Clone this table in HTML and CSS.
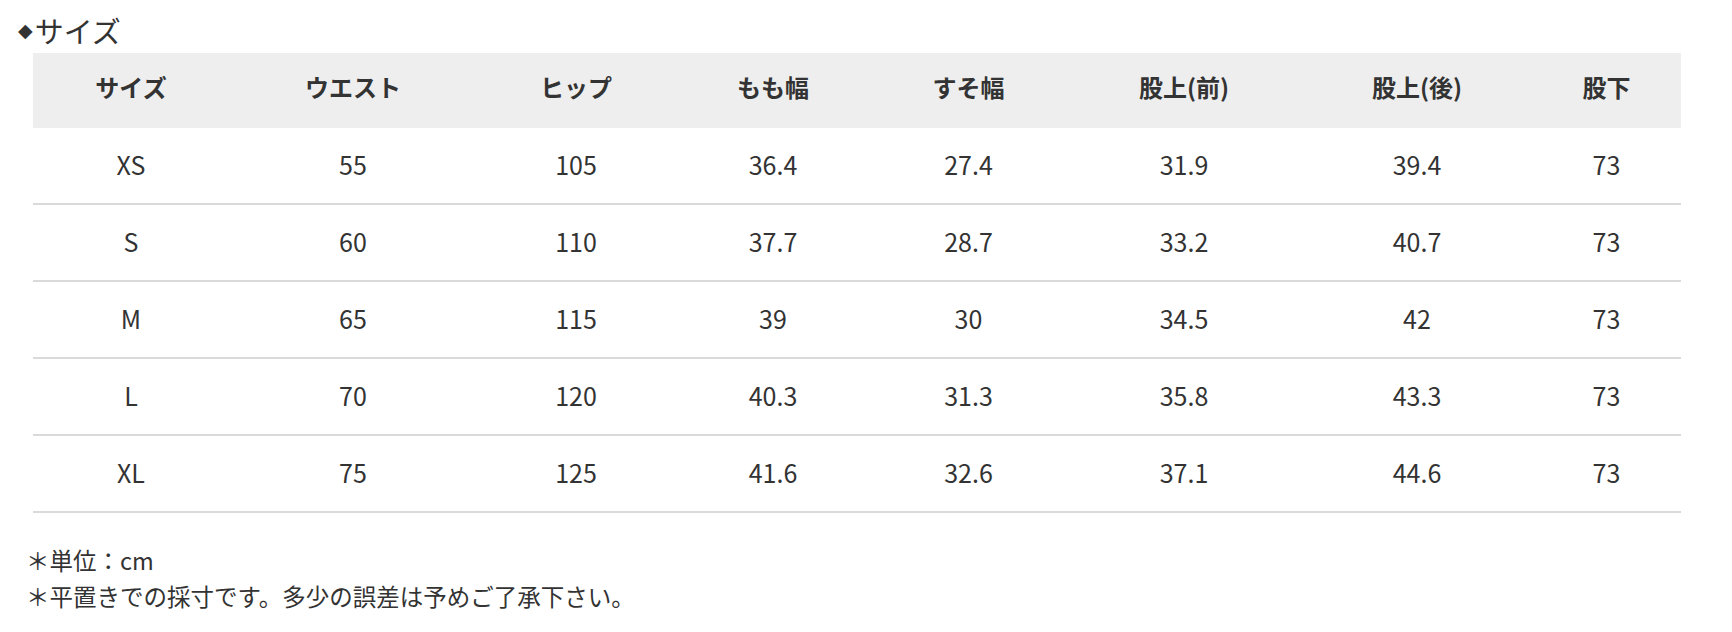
FILE: index.html
```html
<!DOCTYPE html>
<html lang="ja">
<head>
<meta charset="utf-8">
<title>サイズ</title>
<link rel="stylesheet" href="styles.css">
</head>
<body>
<section class="size-section">
  <h2 class="size-title"><span class="diamond">◆</span>サイズ</h2>
  <table class="size-table">
    <colgroup>
      <col class="c1"><col class="c2"><col class="c3"><col class="c4">
      <col class="c5"><col class="c6"><col class="c7"><col class="c8">
    </colgroup>
    <thead>
      <tr><th>サイズ</th><th>ウエスト</th><th>ヒップ</th><th>もも幅</th><th>すそ幅</th><th>股上(前)</th><th>股上(後)</th><th>股下</th></tr>
    </thead>
    <tbody>
      <tr><td>XS</td><td>55</td><td>105</td><td>36.4</td><td>27.4</td><td>31.9</td><td>39.4</td><td>73</td></tr>
      <tr><td>S</td><td>60</td><td>110</td><td>37.7</td><td>28.7</td><td>33.2</td><td>40.7</td><td>73</td></tr>
      <tr><td>M</td><td>65</td><td>115</td><td>39</td><td>30</td><td>34.5</td><td>42</td><td>73</td></tr>
      <tr><td>L</td><td>70</td><td>120</td><td>40.3</td><td>31.3</td><td>35.8</td><td>43.3</td><td>73</td></tr>
      <tr><td>XL</td><td>75</td><td>125</td><td>41.6</td><td>32.6</td><td>37.1</td><td>44.6</td><td>73</td></tr>
    </tbody>
  </table>
  <div class="notes">
    <p>＊単位：cm</p>
    <p>＊平置きでの採寸です。多少の誤差は予めご了承下さい。</p>
  </div>
</section>
</body>
</html>
```

FILE: styles.css
```css
html, body {
  margin: 0;
  padding: 0;
  background: #ffffff;
}
body {
  font-family: "Noto Sans CJK JP", "Noto Sans", sans-serif;
  color: #333333;
}
.size-section {
  padding: 10px 0 0 18px;
}
.size-title {
  margin: 0;
  font-size: 29px;
  font-weight: normal;
  line-height: 40px;
  color: #333333;
  display: flex;
  align-items: center;
}
.diamond {
  font-family: "DejaVu Sans", sans-serif;
  font-size: 19px;
  margin-right: 2px;
}
.size-table {
  margin: 3px 0 0 15px;
  width: 1648px;
  border-collapse: collapse;
  table-layout: fixed;
}
.c1 { width: 196px; }
.c2 { width: 248px; }
.c3 { width: 198px; }
.c4 { width: 196px; }
.c5 { width: 195px; }
.c6 { width: 236px; }
.c7 { width: 230px; }
.c8 { width: 149px; }
.size-table th {
  background: #eeeeee;
  height: 67px;
  padding: 0 0 8px;
  font-size: 24px;
  font-weight: bold;
  text-align: center;
  vertical-align: middle;
  color: #333333;
}
.size-table td {
  height: 71px;
  padding: 0 0 4px;
  font-size: 25px;
  text-align: center;
  vertical-align: middle;
  border-bottom: 2px solid #dadada;
  color: #333333;
}
.notes {
  margin: 29px 0 0 8px;
}
.notes p {
  margin: 0;
  font-size: 23.5px;
  line-height: 36px;
}
```
